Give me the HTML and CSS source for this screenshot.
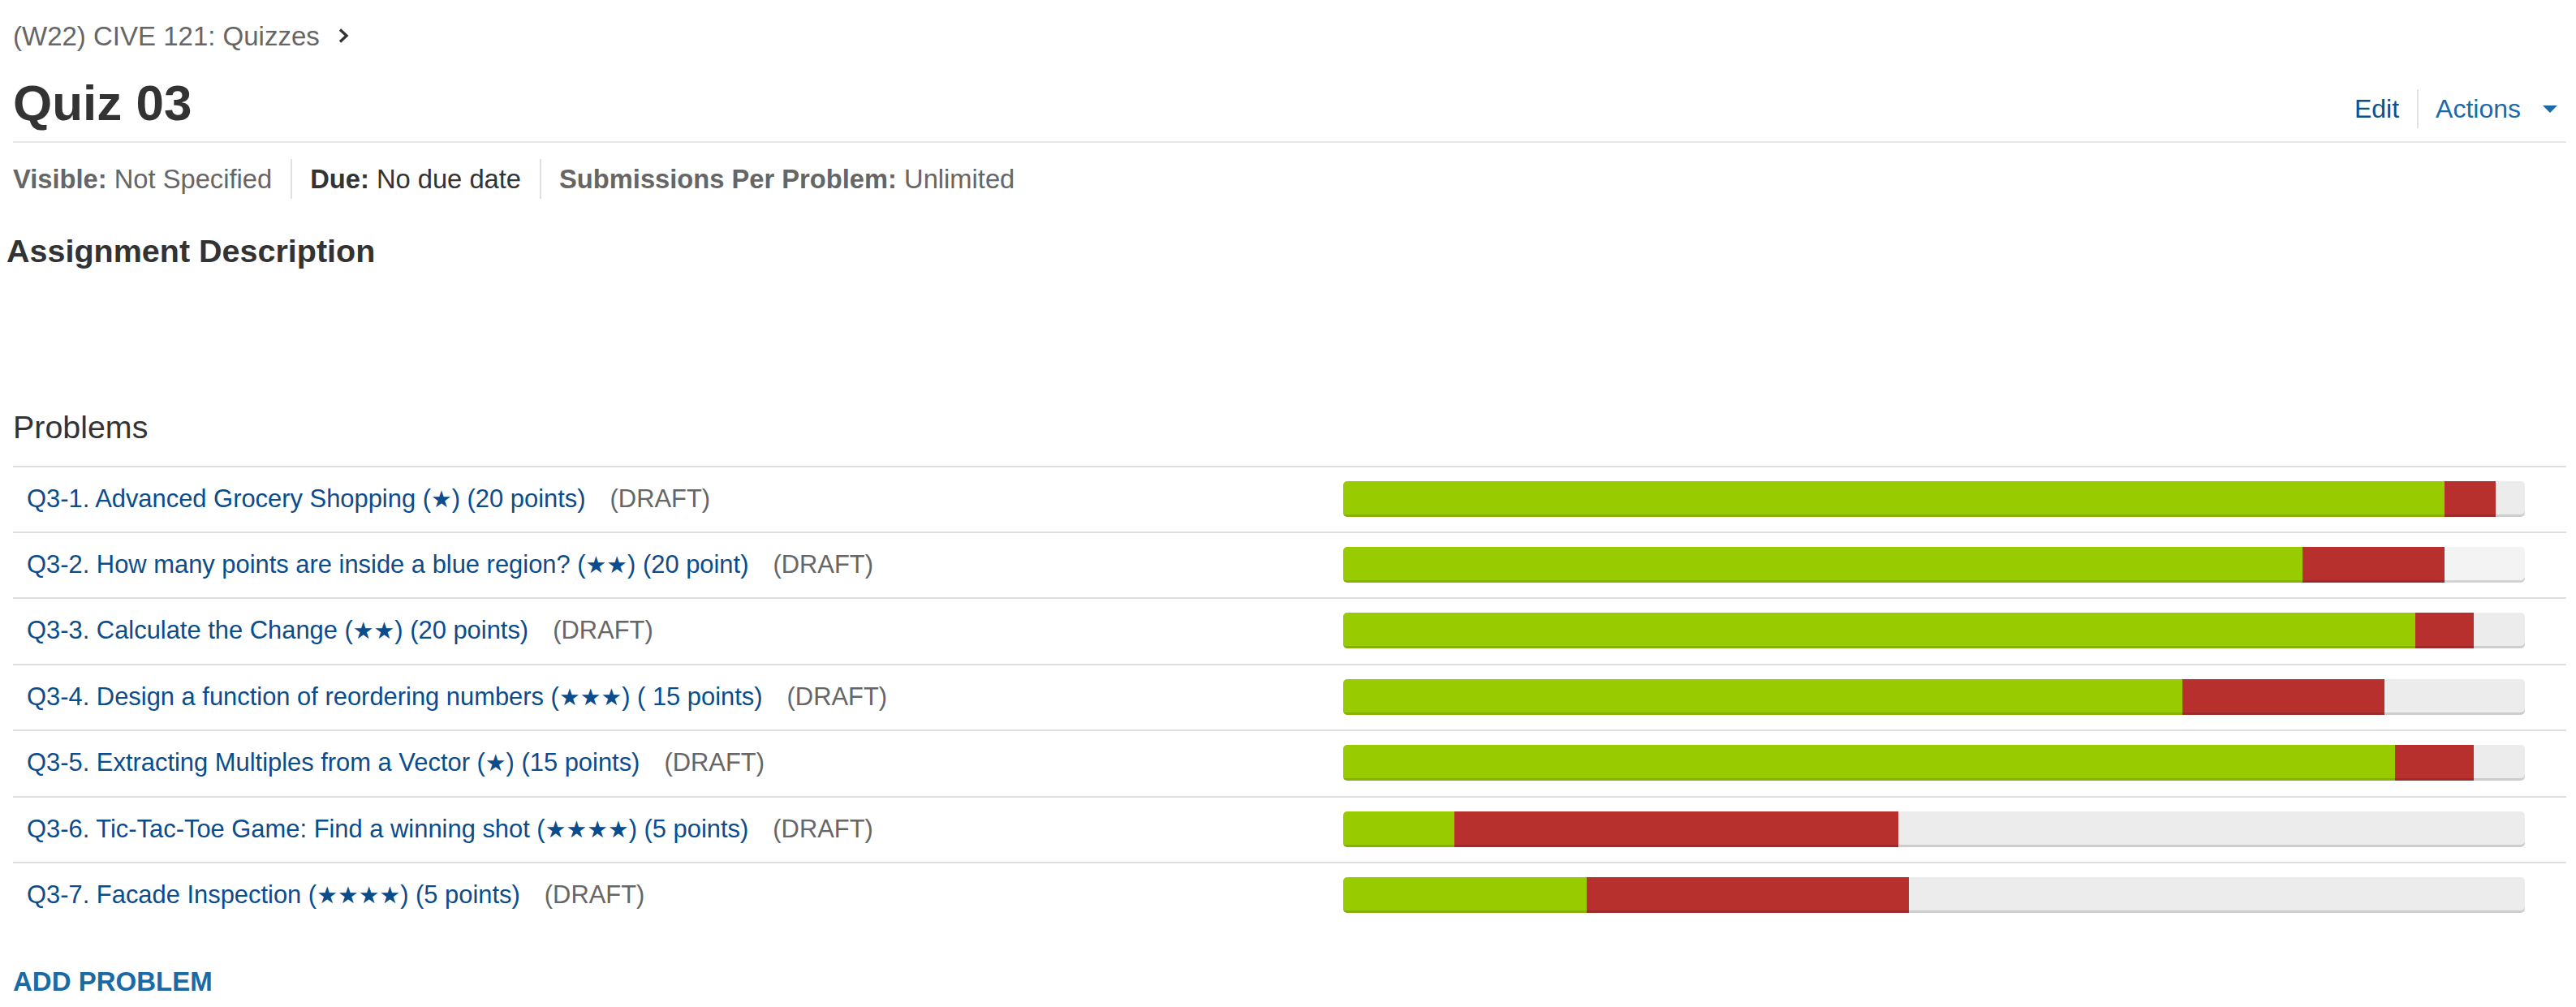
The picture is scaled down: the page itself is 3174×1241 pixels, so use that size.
FILE: index.html
```html
<!DOCTYPE html>
<html lang="en">
<head>
<meta charset="utf-8">
<title>Quiz 03</title>
<link rel="stylesheet" href="styles.css">
</head>
<body>
<div class="page">
  <nav class="crumbs">
    <a class="crumb-link" href="#">(W22) CIVE 121: Quizzes</a>
    <svg class="chev" width="14" height="20" viewBox="0 0 14 20"><polyline points="3,2.5 11,10 3,17.5" fill="none" stroke="#333" stroke-width="3.4" stroke-linejoin="miter"/></svg>
  </nav>

  <header class="head">
    <h1 class="title">Quiz 03</h1>
    <div class="actions">
      <a class="edit" href="#">Edit</a>
      <span class="vsep"></span>
      <a class="act" href="#">Actions</a>
      <svg class="caret" width="18" height="9" viewBox="0 0 18 9"><polygon points="0,0 18,0 9,9" fill="#1a6aa7"/></svg>
    </div>
  </header>

  <div class="meta">
    <div class="meta-item muted"><b>Visible:</b> Not Specified</div>
    <div class="meta-item dark"><b>Due:</b> No due date</div>
    <div class="meta-item muted"><b>Submissions Per Problem:</b> Unlimited</div>
  </div>

  <h2 class="desc-title">Assignment Description</h2>

  <h3 class="problems-title">Problems</h3>

  <div class="plist">
    <div class="prow">
      <div class="ptext"><a href="#">Q3-1. Advanced Grocery Shopping (<span class="stars">★</span>) (20 points)</a><span class="draft">(DRAFT)</span></div>
      <div class="track"><span class="seg ok" style="width:93.2%"></span><span class="seg bad" style="width:4.3%"></span></div>
    </div>
    <div class="prow">
      <div class="ptext"><a href="#">Q3-2. How many points are inside a blue region? (<span class="stars">★★</span>) (20 point)</a><span class="draft">(DRAFT)</span></div>
      <div class="track light"><span class="seg ok" style="width:81.2%"></span><span class="seg bad" style="width:12%"></span></div>
    </div>
    <div class="prow">
      <div class="ptext"><a href="#">Q3-3. Calculate the Change (<span class="stars">★★</span>) (20 points)</a><span class="draft">(DRAFT)</span></div>
      <div class="track"><span class="seg ok" style="width:90.7%"></span><span class="seg bad" style="width:5%"></span></div>
    </div>
    <div class="prow">
      <div class="ptext"><a href="#">Q3-4. Design a function of reordering numbers (<span class="stars">★★★</span>) ( 15 points)</a><span class="draft">(DRAFT)</span></div>
      <div class="track"><span class="seg ok" style="width:71%"></span><span class="seg bad" style="width:17.1%"></span></div>
    </div>
    <div class="prow">
      <div class="ptext"><a href="#">Q3-5. Extracting Multiples from a Vector (<span class="stars">★</span>) (15 points)</a><span class="draft">(DRAFT)</span></div>
      <div class="track"><span class="seg ok" style="width:89%"></span><span class="seg bad" style="width:6.7%"></span></div>
    </div>
    <div class="prow">
      <div class="ptext"><a href="#">Q3-6. Tic-Tac-Toe Game: Find a winning shot (<span class="stars">★★★★</span>) (5 points)</a><span class="draft">(DRAFT)</span></div>
      <div class="track"><span class="seg ok" style="width:9.4%"></span><span class="seg bad" style="width:37.6%"></span></div>
    </div>
    <div class="prow">
      <div class="ptext"><a href="#">Q3-7. Facade Inspection (<span class="stars">★★★★</span>) (5 points)</a><span class="draft">(DRAFT)</span></div>
      <div class="track"><span class="seg ok" style="width:20.6%"></span><span class="seg bad" style="width:27.3%"></span></div>
    </div>
  </div>

  <a class="add" href="#">ADD PROBLEM</a>
</div>
</body>
</html>
```

FILE: styles.css
```css
* { box-sizing: border-box; }
html, body { margin: 0; padding: 0; background: #fff; }
body {
  font-family: "Liberation Sans", Arial, sans-serif;
  color: #333;
}
a { text-decoration: none; }

.page {
  padding: 25px 12px 0 16px;
}

/* breadcrumb */
.crumbs {
  display: flex;
  align-items: center;
  height: 40px;
}
.crumb-link {
  font-size: 33px;
  line-height: 40px;
  color: #666;
}
.chev {
  margin-left: 22px;
  margin-top: -2px;
}

/* header */
.head {
  display: flex;
  justify-content: space-between;
  align-items: flex-end;
  margin-top: 26.5px;
  padding-bottom: 12.5px;
  border-bottom: 2px solid #e5e5e5;
}
.title {
  margin: 0;
  font-size: 62px;
  line-height: 70px;
  font-weight: bold;
  color: #333;
}
.actions {
  display: flex;
  align-items: center;
  margin-bottom: 4px;
  padding-right: 11px;
  height: 48px;
}
.edit, .act {
  font-size: 32px;
  line-height: 48px;
}
.edit { color: #0e4f8b; }
.act { color: #1a6aa7; }
.vsep {
  width: 2px;
  height: 48px;
  background: #e2e2e2;
  margin: 0 21px 0 22px;
}
.caret {
  margin-left: 27px;
  margin-top: 2px;
}

/* meta */
.meta {
  display: flex;
  margin-top: 19.8px;
}
.meta-item {
  font-size: 32.7px;
  line-height: 49px;
  padding: 0 22.5px;
}
.meta-item:first-child { padding-left: 0; }
.meta-item + .meta-item { border-left: 2px solid #e0e0e0; }
.meta-item.muted { color: #666; }
.meta-item.dark { color: #333; }

/* description */
.desc-title {
  margin: 41px 0 0 -8px;
  font-size: 39.5px;
  line-height: 46px;
  font-weight: bold;
  color: #333;
}

.problems-title {
  margin: 172.6px 0 0 0;
  font-size: 39.4px;
  line-height: 44px;
  font-weight: normal;
  color: #333;
}

/* problem list */
.plist {
  margin-top: 25.2px;
}
.prow {
  display: grid;
  grid-template-columns: 1fr 1456px;
  align-items: center;
  border-top: 2px solid #dedede;
  padding: 17px 51px 18.4px 17px;
}
.ptext {
  font-size: 30.9px;
  white-space: nowrap;
}
.ptext a { color: #0b4c8b; }
.stars {
  font-family: "DejaVu Sans", sans-serif;
  font-size: 0.93em;
  line-height: 1;
}
.draft {
  color: #666;
  margin-left: 30px;
}
.track {
  display: flex;
  height: 44px;
  border-radius: 5px;
  overflow: hidden;
  background: #ececec;
  box-shadow: inset 0 -3px 0 rgba(0, 0, 0, 0.13);
}
.track.light { background: #f3f3f3; }
.seg {
  display: block;
  height: 100%;
  box-shadow: inset 0 -3px 0 rgba(0, 0, 0, 0.13);
}
.seg.ok { background: #99cc00; }
.seg.bad { background: #b7302e; }

.add {
  display: inline-block;
  margin-top: 47px;
  font-size: 33px;
  line-height: 40px;
  font-weight: bold;
  color: #1a6aa5;
}
```
